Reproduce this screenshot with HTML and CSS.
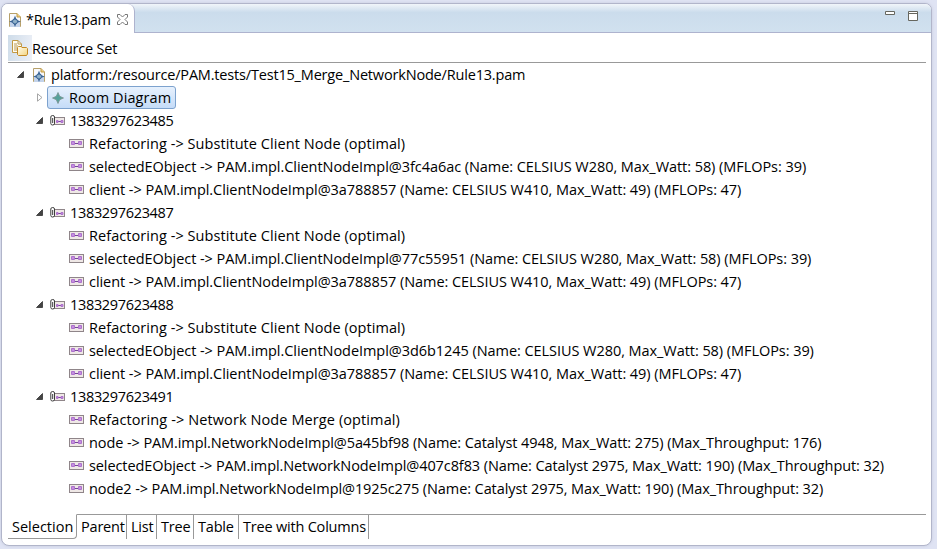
FILE: index.html
```html
<!DOCTYPE html>
<html lang="en">
<head>
<meta charset="utf-8">
<title>Rule13.pam</title>
<link rel="stylesheet" href="styles.css">
</head>
<body>
<svg class="defs" width="0" height="0">
  <defs>
    <linearGradient id="gold" x2="1" y2="1"><stop offset="0" stop-color="#fffdf0"/><stop offset="1" stop-color="#f3d583"/></linearGradient>
    <symbol id="file" viewBox="0 0 12 14">
      <path d="M.5 .5H8L11.500 4V13.500H.5Z" fill="#f8f9fd" stroke="#b7a06a"/>
      <path d="M8 .5V4H11.500" fill="#edcf83" stroke="#c39b42"/>
      <path d="M1 14V9L6 4L11 9V14Z" fill="#c3d3ea"/>
      <path d="M6 2.500L7.600 6.900L12 8.500L7.600 10.100L6 14L4.400 10.100L0 8.500L4.400 6.900Z" fill="#3a6494"/>
      <circle cx="6" cy="8.500" r="2.500" fill="#8fb0c8" stroke="#3a6494"/>
    </symbol>
    <symbol id="set" viewBox="0 0 16 16">
      <path d="M.5 .5H6L9.500 4V12.500H.5Z" fill="#fffdf2" stroke="#c29a45"/>
      <path d="M6 .5V4H9.500M2 4H5M2 6H6M2 8H5M2 10H5" fill="none" stroke="#b99a58"/>
      <path d="M5.500 7.500L6.500 6.500H9L10 7.500H14.500L15.500 8.500V14L14.500 15.500H6.500L5.500 14.500Z" fill="url(#gold)" stroke="#c48a25"/>
    </symbol>
    <symbol id="star" viewBox="0 0 12 12"><path d="M6 .5L7.700 4.300L11.500 6L7.700 7.700L6 11.500L4.300 7.700L.5 6L4.300 4.300Z" fill="#55a29b" stroke="#7c9290" stroke-width=".8"/></symbol>
    <symbol id="link" viewBox="0 0 15 9">
      <rect x=".5" y=".5" width="14" height="8" fill="#efe8e6" stroke="#8f8589"/>
      <path d="M5 4.500H10" stroke="#74449a"/><path d="M2.500 2.500H5.500V5.500H2.500ZM9.500 2.500H12.500V5.500H9.500Z" fill="#c58ee0" stroke="#ad72cc"/>
    </symbol>
    <symbol id="clip" viewBox="0 0 16 11">
      <rect x="4.500" y="2.500" width="10" height="7" fill="#efe8e6" stroke="#8f8589"/>
      <path d="M7 6.500H11" stroke="#74449a"/><path d="M6.500 5.500H8V7.500H6.500ZM11 5.500H13V7.500H11Z" fill="#c58ee0" stroke="#ad72cc"/>
      <path d="M.8 2V8.500Q.8 10 2.500 10Q4.500 10 4.500 8.500V2Q4.500 .5 2.700 .5Q.8 .5 .8 2M2.700 3V8" fill="none" stroke="#3c3c3c"/>
    </symbol>
    <symbol id="open" viewBox="0 0 7 7"><path d="M6.500 .5V6.500H.5Z" fill="#444" stroke="#222" stroke-width=".7"/></symbol>
    <symbol id="closed" viewBox="0 0 6 9"><path d="M.5 .8V8.200L5 4.500Z" fill="#fff" stroke="#a6a6a6"/></symbol>
  </defs>
</svg>
<main class="view">
  <header class="titlebar">
    <div class="tab"><svg class="i-file"><use href="#file"/></svg><span class="tab-name">*Rule13.pam</span>
      <svg class="close" viewBox="0 0 11 11"><path d="M.5 .5H3L5.500 3L8 .5H10.500V3L8 5.500L10.500 8V10.500H8L5.500 8L3 10.500H.5V8L3 5.500L.5 3Z" fill="#fff" stroke="#777"/></svg></div>
    <svg class="controls" viewBox="0 0 34 10"><path d="M.5 .5H9.500V3.500H.5ZM23.500 .5H32.500V9.500H23.500ZM23.500 2.500H32.500" fill="#fff" stroke="#66665f"/></svg>
  </header>
  <section class="toolbar"><span class="set-icon"><svg class="i-set"><use href="#set"/></svg></span><span class="caption">Resource Set</span></section>
  <section class="tree">
    <div class="row root"><svg class="arrow"><use href="#open"/></svg><svg class="i-file"><use href="#file"/></svg><span class="t">platform:/resource/PAM.tests/Test15_Merge_NetworkNode/Rule13.pam</span></div>
    <div class="row node"><svg class="arrow shut"><use href="#closed"/></svg><div class="selected"><svg class="i-star"><use href="#star"/></svg><span class="t">Room Diagram</span></div></div>
    <div class="row node stamp"><svg class="arrow"><use href="#open"/></svg><svg class="i-clip"><use href="#clip"/></svg><span class="t">1383297623485</span></div>
    <div class="row leaf rule"><svg class="i-link"><use href="#link"/></svg><span class="t">Refactoring -&gt; Substitute Client Node (optimal)</span></div>
    <div class="row leaf"><svg class="i-link"><use href="#link"/></svg><span class="t">selectedEObject -&gt; PAM.impl.ClientNodeImpl@3fc4a6ac (Name: CELSIUS W280, Max_Watt: 58) (MFLOPs: 39)</span></div>
    <div class="row leaf"><svg class="i-link"><use href="#link"/></svg><span class="t">client -&gt; PAM.impl.ClientNodeImpl@3a788857 (Name: CELSIUS W410, Max_Watt: 49) (MFLOPs: 47)</span></div>
    <div class="row node stamp"><svg class="arrow"><use href="#open"/></svg><svg class="i-clip"><use href="#clip"/></svg><span class="t">1383297623487</span></div>
    <div class="row leaf rule"><svg class="i-link"><use href="#link"/></svg><span class="t">Refactoring -&gt; Substitute Client Node (optimal)</span></div>
    <div class="row leaf"><svg class="i-link"><use href="#link"/></svg><span class="t">selectedEObject -&gt; PAM.impl.ClientNodeImpl@77c55951 (Name: CELSIUS W280, Max_Watt: 58) (MFLOPs: 39)</span></div>
    <div class="row leaf"><svg class="i-link"><use href="#link"/></svg><span class="t">client -&gt; PAM.impl.ClientNodeImpl@3a788857 (Name: CELSIUS W410, Max_Watt: 49) (MFLOPs: 47)</span></div>
    <div class="row node stamp"><svg class="arrow"><use href="#open"/></svg><svg class="i-clip"><use href="#clip"/></svg><span class="t">1383297623488</span></div>
    <div class="row leaf rule"><svg class="i-link"><use href="#link"/></svg><span class="t">Refactoring -&gt; Substitute Client Node (optimal)</span></div>
    <div class="row leaf"><svg class="i-link"><use href="#link"/></svg><span class="t">selectedEObject -&gt; PAM.impl.ClientNodeImpl@3d6b1245 (Name: CELSIUS W280, Max_Watt: 58) (MFLOPs: 39)</span></div>
    <div class="row leaf"><svg class="i-link"><use href="#link"/></svg><span class="t">client -&gt; PAM.impl.ClientNodeImpl@3a788857 (Name: CELSIUS W410, Max_Watt: 49) (MFLOPs: 47)</span></div>
    <div class="row node stamp"><svg class="arrow"><use href="#open"/></svg><svg class="i-clip"><use href="#clip"/></svg><span class="t">1383297623491</span></div>
    <div class="row leaf rule merge"><svg class="i-link"><use href="#link"/></svg><span class="t">Refactoring -&gt; Network Node Merge (optimal)</span></div>
    <div class="row leaf network"><svg class="i-link"><use href="#link"/></svg><span class="t">node -&gt; PAM.impl.NetworkNodeImpl@5a45bf98 (Name: Catalyst 4948, Max_Watt: 275) (Max_Throughput: 176)</span></div>
    <div class="row leaf network"><svg class="i-link"><use href="#link"/></svg><span class="t">selectedEObject -&gt; PAM.impl.NetworkNodeImpl@407c8f83 (Name: Catalyst 2975, Max_Watt: 190) (Max_Throughput: 32)</span></div>
    <div class="row leaf network"><svg class="i-link"><use href="#link"/></svg><span class="t">node2 -&gt; PAM.impl.NetworkNodeImpl@1925c275 (Name: Catalyst 2975, Max_Watt: 190) (Max_Throughput: 32)</span></div>
  </section>
  <nav class="pages"><span class="page active">Selection</span><span class="page parent">Parent</span><span class="page list">List</span><span class="page tree-tab">Tree</span><span class="page table">Table</span><span class="page columns">Tree with Columns</span><span class="rest"></span></nav>
</main>
</body>
</html>
```
FILE: styles.css
```css
* { box-sizing: border-box; }
body {
  margin: 0;
  width: 937px;
  height: 549px;
  padding: 3px 5px 3px 1px;
  overflow: hidden;
  background: #dfe3f3;
  color: #000;
  font: 14.5px/23px "Open Sans", "Noto Sans", sans-serif;
  letter-spacing: -0.055px;
  white-space: nowrap;
}
svg { display: block; flex: none; }
.defs { position: absolute; }
.view {
  width: 931px;
  height: 543px;
  border: 1px solid #b1b5ca;
  border-radius: 7px 7px 8px 8px;
  background: #fff;
  overflow: hidden;
  box-shadow: 0 0 3px #c5cadd;
}
.titlebar {
  display: flex;
  justify-content: space-between;
  height: 29px;
  border-bottom: 1px solid #aeb3ce;
  background: linear-gradient(#f1f5fa, #cbdcec 30%, #d1e1ef);
}
.tab {
  display: flex;
  align-items: center;
  width: 133px;
  height: 29px;
  padding: 2px 0 0 7px;
  border-right: 1px solid #aeb3ce;
  border-radius: 0 7px 0 0;
  background: #fff;
}
.tab-name { width: 85px; margin-left: 5px; letter-spacing: -0.35px; }
.close { width: 11px; height: 11px; margin-left: 6px; }
.controls { width: 34px; height: 10px; margin: 7px 12px 0 0; }
.toolbar {
  display: flex;
  align-items: center;
  height: 30px;
  margin: 0 5px 0 6px;
  border-bottom: 1px solid #999;
}
.caption { padding-top: 1px; letter-spacing: -0.2px; }
.set-icon { width: 24px; height: 26px; padding: 5px 4px; background: linear-gradient(100deg, #cedce9, #edf0f7); }
.tree { height: 451px; }
.row { display: flex; align-items: center; height: 23px; }
.root { padding-left: 15px; letter-spacing: -0.18px; }
.node { padding-left: 34px; }
.leaf { padding-left: 67px; }
.rule { letter-spacing: 0.06px; }
.merge { letter-spacing: 0.1px; }
.network { letter-spacing: -0.09px; }
.stamp { letter-spacing: -0.33px; }
.arrow { width: 7px; height: 7px; margin-right: 7px; }
.root .arrow { margin-right: 9px; }
.node .shut { width: 6px; height: 9px; margin: 0 4px 0 1px; }
.t { margin-left: 5px; }
.root .t { margin-left: 6px; }
.stamp .t { margin-left: 4px; }
.i-file { width: 12px; height: 14px; }
.i-set { width: 16px; height: 16px; }
.i-star { width: 12px; height: 12px; }
.i-clip { width: 16px; height: 11px; }
.i-link { width: 15px; height: 9px; }
.selected {
  display: flex;
  align-items: center;
  width: 129px;
  height: 23px;
  padding-left: 4px;
  border: 1px solid #7da2ce;
  border-radius: 3px;
  background: linear-gradient(#e7f1fd, #c5dcf8);
  letter-spacing: 0.1px;
}
.pages { display: flex; height: 25px; margin: 0 5px 0 6px; line-height: 24px; }
.page { height: 25px; padding-left: 4px; border-top: 1px solid #999; border-right: 1px solid #999; letter-spacing: -0.2px; }
.page.active { width: 69px; border-top-color: #fff; border-bottom: 1px solid #999; border-radius: 0 0 4px 0; letter-spacing: 0; }
.parent { width: 50px; }
.list { width: 30px; }
.tree-tab { width: 37px; }
.table { width: 45px; }
.columns { width: 130px; }
.page.active { border-top-color: transparent; }
.rest { flex: 1; border-top: 1px solid #999; }
```
